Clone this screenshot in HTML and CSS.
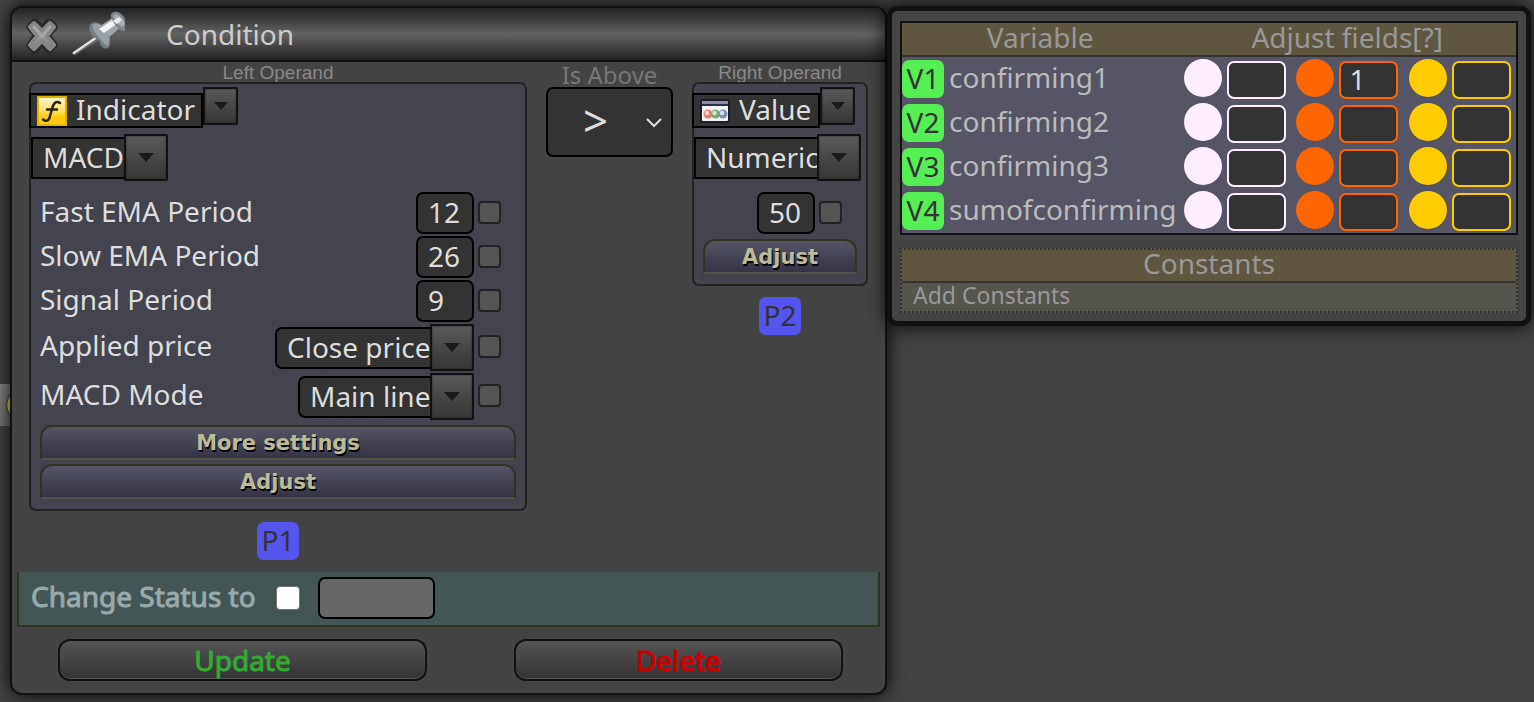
FILE: index.html
```html
<!DOCTYPE html>
<html lang="en">
<head>
<meta charset="utf-8">
<title>Condition</title>
<link rel="stylesheet" href="styles.css">
</head>
<body>
<div class="node" aria-hidden="true"></div>
<main class="desktop">
  <section class="dialog">
    <header class="titlebar">
      <button class="icon-btn" type="button" aria-label="Close">
        <svg width="42" height="42" viewBox="0 0 42 42">
          <defs><linearGradient id="metal" x1="0" y1="0" x2="0" y2="1"><stop offset="0" stop-color="#808080"/><stop offset=".5" stop-color="#9c9c9c"/><stop offset="1" stop-color="#7c7c7c"/></linearGradient></defs>
          <path d="M10 13 14 9 21 16 28 9 32 13 25 21 32 31 28 35 21 27 14 35 10 31 17 21Z" fill="#2a2a2a" stroke="#2a2a2a" stroke-width="9" stroke-linejoin="round"/>
          <path d="M9 13 13 9 21 17 29 9 33 13 26 22 33 31 29 35 21 27 13 35 9 31 16 22Z" fill="url(#metal)" stroke="#878787" stroke-width="4" stroke-linejoin="round"/>
          <path d="M13 13 21 22M29 13 21 22" stroke="#a6a6a6" stroke-width="3" stroke-linecap="round"/>
        </svg>
      </button>
      <button class="icon-btn icon-pin" type="button" aria-label="Pin">
        <svg width="56" height="46" viewBox="0 0 56 46">
          <path d="M1 43 28 22 31 27 4 44Z" fill="#6d6d6d"/>
          <path d="M2 42.500 29 24" stroke="#e2e2e2" stroke-width="2.200"/>
          <path d="M19 14C22 9 29 11 34 17 40 24 41 34 37 37 33 39 29 35 28 29 22 27 16 20 19 14Z" fill="#757d84"/>
          <path d="M21 14C26 10 32 14 36 21 39 27 39 33 36 35 30 30 22 21 21 14Z" fill="#98a1a7"/>
          <path d="M28 16 41 7 49 17 38 26C37 21 33 17 28 16Z" fill="#a0a7ab"/>
          <path d="M28 18 43 8 47 12 33 22Z" fill="#f3f4f5"/>
          <path d="M41 2C45-1 51 2 54 8V20C50 21 46 17 43 12 40 8 39 4 41 2Z" fill="#7f888e"/>
          <path d="M43 4C47 2 52 7 54 13L51 16C46 13 42 8 43 4Z" fill="#a9b0b5"/>
          <path d="M42 10 48 6 51 9 46 13Z" fill="#eceeef"/>
        </svg>
      </button>
      <h1 class="title">Condition</h1>
    </header>

    <div class="operands">
      <div class="operand">
        <h2 class="caption">Left Operand</h2>
        <div class="box">
          <div class="combo combo-type">
            <label class="combo-field field-indicator">
              <svg width="30" height="30" viewBox="0 0 30 30" aria-hidden="true">
                <defs><linearGradient id="gold" x1="0" y1="0" x2="0" y2="1"><stop offset="0" stop-color="#fff8dc"/><stop offset=".5" stop-color="#ffdf60"/><stop offset=".75" stop-color="#ffc800"/><stop offset="1" stop-color="#ffd21c"/></linearGradient></defs>
                <rect x="1" y="1" width="28" height="28" fill="url(#gold)" stroke="#e5b100" stroke-width="2"/>
                <path d="M23 7C19 4 16 8 15 13L13 20C12 25 9 26 6 23.500M10 13.500H20" fill="none" stroke="#2d2410" stroke-width="2.500" stroke-linecap="round"/>
              </svg>
              <input type="text" value="Indicator" aria-label="Left operand type">
            </label>
            <button class="drop drop-small" type="button" aria-label="Choose left operand type"></button>
          </div>
          <div class="combo combo-kind">
            <input class="combo-input w-macd" type="text" value="MACD" aria-label="Indicator name">
            <button class="drop" type="button" aria-label="Choose indicator"></button>
          </div>
          <div class="params">
            <div class="param"><label for="fast">Fast EMA Period</label><input class="num" id="fast" type="text" value="12"><input class="tick" type="checkbox" aria-label="Adjust Fast EMA Period"></div>
            <div class="param"><label for="slow">Slow EMA Period</label><input class="num" id="slow" type="text" value="26"><input class="tick" type="checkbox" aria-label="Adjust Slow EMA Period"></div>
            <div class="param"><label for="signal">Signal Period</label><input class="num" id="signal" type="text" value="9"><input class="tick" type="checkbox" aria-label="Adjust Signal Period"></div>
            <div class="param param-tall"><label for="price">Applied price</label><span class="combo"><input class="combo-input rounded w-price" id="price" type="text" value="Close price"><button class="drop" type="button" aria-label="Choose applied price"></button></span><input class="tick" type="checkbox" aria-label="Adjust Applied price"></div>
            <div class="param param-tall"><label for="mode">MACD Mode</label><span class="combo"><input class="combo-input rounded w-mode" id="mode" type="text" value="Main line"><button class="drop" type="button" aria-label="Choose MACD mode"></button></span><input class="tick" type="checkbox" aria-label="Adjust MACD Mode"></div>
          </div>
          <div class="actions">
            <button class="tab-btn" type="button">More settings</button>
            <button class="tab-btn" type="button">Adjust</button>
          </div>
        </div>
        <span class="chip chip-point">P1</span>
      </div>

      <div class="operator">
        <label class="operator-label" for="op">Is Above</label>
        <div class="operator-box">
          <select id="op"><option>&gt;</option></select>
          <svg class="chevron" width="18" height="12" viewBox="0 0 18 12" aria-hidden="true"><path d="M2 2 9 9 16 2" fill="none" stroke="#ddd" stroke-width="2"/></svg>
        </div>
      </div>

      <div class="operand">
        <h2 class="caption">Right Operand</h2>
        <div class="box">
          <div class="combo combo-type">
            <label class="combo-field field-value">
              <svg width="30" height="24" viewBox="0 0 30 24" aria-hidden="true">
                <rect x="1" y="1" width="28" height="22" rx="2" fill="#f4f4f4" stroke="#1d1d28" stroke-width="2"/>
                <path d="M2 2H28V5H2Z" fill="#8a8aa6"/><path d="M2 5H28V7H2Z" fill="#2c2c4c"/>
                <circle cx="8" cy="15" r="4.500" fill="#e8806d"/><circle cx="15.500" cy="15" r="4.500" fill="#76ad75"/><circle cx="23" cy="15" r="4.500" fill="#8193b3"/>
                <circle cx="7" cy="14" r="2.200" fill="#f9d8d2"/><circle cx="14.500" cy="14" r="2.200" fill="#d3ead2"/><circle cx="22" cy="14" r="2.200" fill="#d7deeb"/>
              </svg>
              <input type="text" value="Value" aria-label="Right operand type">
            </label>
            <button class="drop drop-small" type="button" aria-label="Choose right operand type"></button>
          </div>
          <div class="combo combo-kind">
            <input class="combo-input w-numeric" type="text" value="Numeric" aria-label="Value kind">
            <button class="drop" type="button" aria-label="Choose value kind"></button>
          </div>
          <div class="params">
            <div class="param param-right"><input class="num" type="text" value="50" aria-label="Numeric value"><input class="tick" type="checkbox" aria-label="Adjust numeric value"></div>
          </div>
          <div class="actions">
            <button class="tab-btn" type="button">Adjust</button>
          </div>
        </div>
        <span class="chip chip-point">P2</span>
      </div>
    </div>

    <div class="status">
      <label class="heavy" for="chg">Change Status to</label>
      <input class="status-tick" id="chg" type="checkbox">
      <input class="status-field" type="text" aria-label="New status">
    </div>

    <footer class="footer">
      <button class="main-btn update heavy" type="button">Update</button>
      <button class="main-btn delete heavy" type="button">Delete</button>
    </footer>
  </section>

  <aside class="panel">
    <table class="vars">
      <thead>
        <tr><th class="col-var">Variable</th><th colspan="3">Adjust fields[?]</th></tr>
      </thead>
      <tbody>
        <tr>
          <td><div class="var"><span class="chip chip-var">V1</span><span class="var-name">confirming1</span></div></td>
          <td><div class="adj pink"><span class="dot"></span><input type="text" aria-label="V1 pink"></div></td>
          <td><div class="adj orange"><span class="dot"></span><input type="text" value="1" aria-label="V1 orange"></div></td>
          <td><div class="adj yellow"><span class="dot"></span><input type="text" aria-label="V1 yellow"></div></td>
        </tr>
        <tr>
          <td><div class="var"><span class="chip chip-var">V2</span><span class="var-name">confirming2</span></div></td>
          <td><div class="adj pink"><span class="dot"></span><input type="text" aria-label="V2 pink"></div></td>
          <td><div class="adj orange"><span class="dot"></span><input type="text" aria-label="V2 orange"></div></td>
          <td><div class="adj yellow"><span class="dot"></span><input type="text" aria-label="V2 yellow"></div></td>
        </tr>
        <tr>
          <td><div class="var"><span class="chip chip-var">V3</span><span class="var-name">confirming3</span></div></td>
          <td><div class="adj pink"><span class="dot"></span><input type="text" aria-label="V3 pink"></div></td>
          <td><div class="adj orange"><span class="dot"></span><input type="text" aria-label="V3 orange"></div></td>
          <td><div class="adj yellow"><span class="dot"></span><input type="text" aria-label="V3 yellow"></div></td>
        </tr>
        <tr>
          <td><div class="var"><span class="chip chip-var">V4</span><span class="var-name">sumofconfirming</span></div></td>
          <td><div class="adj pink"><span class="dot"></span><input type="text" aria-label="V4 pink"></div></td>
          <td><div class="adj orange"><span class="dot"></span><input type="text" aria-label="V4 orange"></div></td>
          <td><div class="adj yellow"><span class="dot"></span><input type="text" aria-label="V4 yellow"></div></td>
        </tr>
      </tbody>
    </table>
    <section class="constants">
      <h2 class="constants-title">Constants</h2>
      <button class="constants-add" type="button">Add Constants</button>
    </section>
  </aside>
</main>
</body>
</html>
```
FILE: styles.css
```css
* { box-sizing: border-box; }

body {
  margin: 0;
  min-height: 100vh;
  background: #444;
  color: #ddd;
  font: 28px/38px "Noto Sans", sans-serif;
  overflow: hidden;
}

h1, h2 { margin: 0; font-weight: normal; }

input, select, button {
  margin: 0;
  padding: 0;
  border: 0;
  border-radius: 0;
  background: none;
  color: inherit;
  font: inherit;
}

svg { display: block; }

.node {
  position: absolute;
  left: 0;
  top: 384px;
  width: 40px;
  height: 42px;
  background: radial-gradient(circle at 24px 21px, #eeee55 16px, #55552c 17px, transparent 19px), linear-gradient(#8c8c8c, #777);
}

/* Windows */
.desktop {
  position: relative;
  display: grid;
  grid-template-columns: 877fr 644fr;
  align-items: start;
  padding: 6px 3px 0 10px;
}

.dialog {
  border: 2px solid #111;
  border-radius: 12px;
  background: #444;
  box-shadow: 0 0 20px #000;
  overflow: hidden;
}

.titlebar {
  display: flex;
  align-items: center;
  height: 54px;
  padding: 0 9px;
  border-bottom: 2px solid #111;
  background: linear-gradient(#222, #626262 50%, #222);
}

.icon-btn { margin-top: 2px; }
.icon-pin { margin-left: 8px; margin-top: 0; }

.title {
  margin-left: 39px;
  color: #ccc;
  font-size: 28px;
}

/* Operands */
.operands {
  display: grid;
  grid-template-columns: 498fr 127fr 176fr;
  align-items: start;
  column-gap: 19px;
  padding: 0 17px;
}

.operand {
  display: flex;
  flex-direction: column;
  align-items: center;
}

.caption {
  height: 20px;
  color: #888;
  font: 19px/22px "Liberation Sans", Arial, sans-serif;
}

.box {
  align-self: stretch;
  padding: 3px 0 10px;
  border: 2px solid #222;
  border-radius: 7px;
  background: #44444f;
}

.combo { display: flex; align-items: center; }

.combo-type {
  align-items: flex-start;
  height: 41px;
  margin: 0 0 6px -2px;
}

.combo-field {
  display: flex;
  align-items: center;
  align-self: flex-end;
  gap: 9px;
  height: 35px;
  padding-left: 6px;
  border: 2px solid #000;
  background: #333;
}

.combo-field input { height: 31px; padding-bottom: 4px; }
.field-indicator { width: 174px; }
.field-indicator input { width: 125px; }
.field-value { width: 128px; }
.field-value input { width: 79px; }

.combo-kind { margin-bottom: 10px; }

.combo-input {
  height: 42px;
  padding: 0 0 2px 10px;
  border: 2px solid #000;
  border-right: 0;
  background: #333;
}

.rounded { border-radius: 7px 0 0 7px; }
.w-macd { width: 93px; }
.w-numeric { width: 123px; }
.w-price { width: 155px; }
.w-mode { width: 132px; }

.drop {
  flex: none;
  display: flex;
  align-items: center;
  justify-content: center;
  width: 44px;
  height: 47px;
  border: 2px solid #111;
  border-radius: 0 2px 2px 0;
  background: linear-gradient(#5a5a5a, #484848 50%, #363636);
  box-shadow: inset 0 0 2px #222;
}

.drop::before {
  content: "";
  border: 8px solid transparent;
  border-top: 9px solid #1a1a1a;
  border-bottom: 0;
}

.drop-small { width: 35px; height: 38px; }

.drop-small::before { border-width: 8px 7px 0; }

.params { padding: 0 24px 0 9px; }

.param {
  display: flex;
  align-items: center;
  justify-content: space-between;
  height: 44px;
}

.param label { flex: 1; margin-bottom: 4px; }
.param-tall { height: 49px; }
.param-tall label { margin-bottom: 6px; }
.param-right { justify-content: flex-end; }

.num {
  width: 58px;
  height: 42px;
  padding: 0 0 2px 10px;
  border: 2px solid #000;
  border-radius: 7px;
  background: #333;
}

.tick {
  appearance: none;
  width: 23px;
  height: 23px;
  margin: 0 0 2px 4px;
  border: 2px solid #222;
  border-radius: 4px;
  background: #555;
}

.actions {
  display: grid;
  gap: 4px;
  margin: 4px 9px 0;
}

.tab-btn {
  height: 35px;
  border: 2px solid #332;
  border-bottom: 2px dotted #553;
  border-radius: 12px 12px 0 0;
  background: linear-gradient(#556, #334);
  color: #bb9;
  font: bold 21px/28px "DejaVu Sans", Verdana, sans-serif;
  text-shadow: 1px 2px 0 #000;
}

.chip {
  width: 42px;
  height: 38px;
  border-radius: 7px;
  color: #333;
  text-align: center;
  line-height: 36px;
}

.chip-point { margin-top: 11px; background: #55e; }
.chip-var { background: #5e5; }

/* Operator */
.operator { text-align: center; }

.operator-label {
  display: block;
  color: #777;
  font-size: 24px;
  line-height: 25px;
}

.operator-box { position: relative; }

.operator select {
  display: block;
  appearance: none;
  width: 100%;
  height: 70px;
  padding: 0 0 4px 35px;
  border: 2px solid #000;
  border-radius: 7px;
  background: #333;
  font-size: 44px;
}

.chevron { position: absolute; right: 10px; top: 30px; }

/* Status and footer */
.heavy { -webkit-text-stroke: 1px currentColor; }

.status {
  display: flex;
  align-items: center;
  height: 55px;
  margin: 12px 5px 0;
  padding-left: 12px;
  border: 2px solid #332;
  border-top: 0;
  background: #455;
  color: #9aa;
}

.status label { margin-bottom: 6px; }

.status-tick {
  appearance: none;
  width: 24px;
  height: 24px;
  margin: 0 18px 2px 20px;
  border: 1px solid #777;
  border-radius: 4px;
  background: #fff;
}

.status-field {
  width: 117px;
  height: 42px;
  margin-bottom: 2px;
  border: 2px solid #000;
  border-radius: 7px;
  background: #666;
}

.footer {
  display: grid;
  grid-template-columns: 369fr 329fr;
  column-gap: 87px;
  padding: 12px 42px 12px 46px;
}

.main-btn {
  height: 42px;
  padding-bottom: 4px;
  border: 2px solid #111;
  border-radius: 12px;
  background: linear-gradient(#555, #333);
  box-shadow: inset 0 -1px #555;
}

.update { color: #3a3; }
.delete { color: #c00; }

/* Variables panel */
.panel {
  padding: 10px 8px 8px;
  border: 5px solid #111;
  border-radius: 10px;
  background: #444;
  box-shadow: 0 0 20px #000;
}

.vars {
  width: 100%;
  border: 2px solid #111;
  border-collapse: separate;
  border-spacing: 0;
  background: #556;
  table-layout: fixed;
}

.vars th {
  height: 34px;
  padding: 0 0 4px;
  border-bottom: 2px solid #333;
  background: #5f5642;
  color: #999;
  font-weight: normal;
  line-height: 28px;
}

.col-var { width: 45%; }
.vars td { height: 44px; padding: 0; }

.var {
  display: flex;
  align-items: center;
  gap: 5px;
  color: #bbb;
}

.var-name { margin-bottom: 4px; line-height: 34px; }

.adj {
  display: flex;
  justify-content: flex-end;
  align-items: center;
  gap: 5px;
  height: 40px;
  padding-right: 5px;
}

.dot {
  width: 38px;
  height: 38px;
  margin-bottom: 2px;
  border-radius: 50%;
}

.adj input {
  width: 59px;
  height: 38px;
  margin-top: 2px;
  padding: 0 0 2px 8px;
  border: 2px solid;
  border-radius: 7px;
  background: #333;
}

.pink .dot { background: #fef; }
.pink input { border-color: #fef; }
.orange .dot { background: #f60; }
.orange input { border-color: #f60; color: #ddd; }
.yellow .dot { background: #fc0; }
.yellow input { border-color: #fc0; }

.constants {
  margin-top: 13px;
  border: 2px dotted #333;
  background: #55554d;
  color: #999;
}

.constants-title {
  padding-bottom: 4px;
  border-bottom: 2px solid #333;
  background: #5f5642;
  font-size: 28px;
  line-height: 27px;
  text-align: center;
}

.constants-add {
  display: block;
  width: 100%;
  padding: 0 0 3px 11px;
  font-size: 23px;
  line-height: 25px;
  text-align: left;
}
```
